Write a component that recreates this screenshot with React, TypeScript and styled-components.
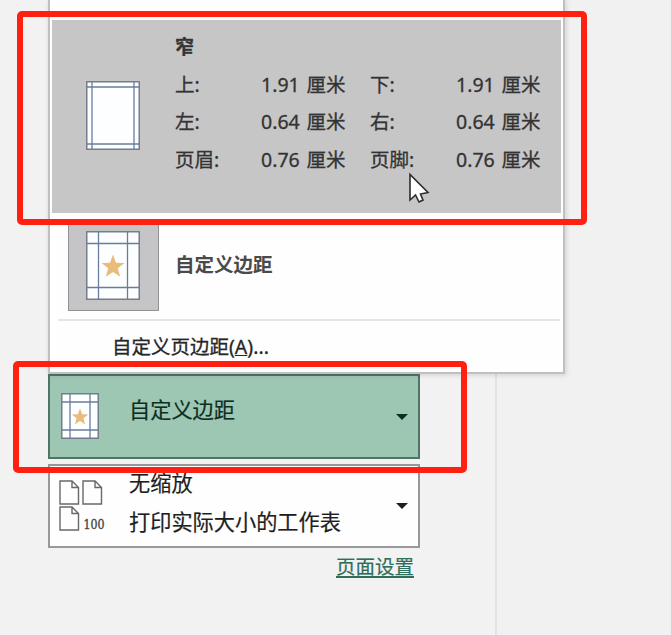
import React from 'react'
import styled, { createGlobalStyle } from 'styled-components'

const GlobalStyle = createGlobalStyle`
  * {
    box-sizing: border-box;
  }
  body {
    margin: 0;
    overflow: hidden;
    background-color: #f1f1f2;
    font-family: 'Noto Sans', 'Noto Sans CJK SC', sans-serif;
  }
`

const Page = styled.div`
  position: relative;
  width: 671px;
  height: 635px;
  overflow: hidden;
`

const Pane = styled.div`
  width: 497px;
  height: 635px;
  padding-left: 48px;
  background-color: #f2f2f2;
  border-right: 2px solid #e2e2e3;
`

const Menu = styled.div`
  position: relative;
  width: 517px;
  height: 374px;
  padding: 20px 2px 0 2px;
  background-color: #fefefe;
  border: solid #c0c0c4;
  border-width: 0 2px 2px 2px;
  box-shadow: 1px 1px 5px rgba(0, 0, 0, 0.14);
`

const Preset = styled.div`
  display: flex;
  height: 193px;
  padding-left: 34px;
  background-color: #c6c6c6;
`

const PresetIcon = styled.div`
  width: 89px;
  padding-top: 61px;
`

const PresetBody = styled.div`
  padding-top: 9px;
  color: #333;
  font-size: 19.5px;
  line-height: 37.2px;
  -webkit-text-stroke: 0.3px #333;
`

const PresetName = styled.div`
  font-weight: 700;
  font-size: 19px;
`

const Values = styled.div`
  display: grid;
  grid-template-columns: 86px 109px 86px 90px;
  white-space: nowrap;
  word-spacing: 1.8px;
`

const CustomRow = styled.div`
  display: flex;
  height: 91px;
  margin: 7px 0 0 16px;
`

const Tile = styled.div`
  display: flex;
  width: 91px;
  height: 91px;
  padding: 10px 0 0 17px;
  background-color: #c5c5c7;
  border: 1px solid #939396;
`

const CustomLabel = styled.div`
  margin-left: 16px;
  color: #4a4a4a;
  font-size: 19.5px;
  font-weight: 700;
  line-height: 90px;
`

const Separator = styled.div`
  height: 2px;
  margin: 8px 1px 0 6px;
  background-color: #e6e4e9;
`

const MenuItem = styled.div`
  padding-left: 60px;
  margin-top: 7px;
  color: #262626;
  font-size: 19.5px;
  line-height: 37px;
  -webkit-text-stroke: 0.3px #262626;
`

const Picker = styled.div<{ $active?: boolean }>`
  display: flex;
  width: 372px;
  height: ${({ $active }) => ($active ? '85px' : '84px')};
  margin-top: ${({ $active }) => ($active ? '0' : '5px')};
  padding-right: 10px;
  color: ${({ $active }) => ($active ? '#0d2e22' : '#1e1e1e')};
  background-color: ${({ $active }) => ($active ? '#9dc6b3' : '#fefefe')};
  border: ${({ $active }) => ($active ? '2px solid #4f7566' : '2px solid #98989b')};
`

const PickerIcon = styled.div<{ $top: number; $left: number }>`
  width: 79px;
  padding: ${({ $top, $left }) => `${$top}px 0 0 ${$left}px`};
`

const PickerText = styled.div<{ $top: number }>`
  flex: 1;
  margin-top: ${({ $top }) => $top}px;
  font-size: 21.2px;
  line-height: 38.5px;
  white-space: nowrap;
  -webkit-text-stroke: 0.2px currentColor;
`

const Arrow = styled.div`
  align-self: center;
  border: 6px solid transparent;
  border-top-color: currentColor;
  border-bottom: 0;
`

const SetupRow = styled.div`
  display: flex;
  justify-content: flex-end;
  width: 366px;
  margin-top: 5px;
`

const SetupLink = styled.a`
  color: #2f6f59;
  font-size: 19.5px;
  line-height: 28px;
  text-decoration: underline;
  text-decoration-thickness: 2px;
  text-underline-offset: 2px;
  -webkit-text-stroke: 0.2px #2f6f59;
`

const Highlight = styled.div<{ $x: number; $y: number; $w: number; $h: number }>`
  position: absolute;
  left: ${({ $x }) => $x}px;
  top: ${({ $y }) => $y}px;
  width: ${({ $w }) => $w}px;
  height: ${({ $h }) => $h}px;
  border: 6px solid #ff2012;
  border-radius: 5px;
`

const Cursor = styled.svg`
  position: absolute;
  left: 407px;
  top: 172px;
`

const star = '0,-12 3,-3.8 11.5,-3.6 4.8,1.8 7.2,10.3 0,5.5 -7.2,10.3 -4.8,1.8 -11.5,-3.6 -3,-3.8'

type MarginIconProps = {
  w: number
  h: number
  x: number
  y: number
  starScale?: number
}

function MarginIcon({ w, h, x, y, starScale }: MarginIconProps) {
  return (
    <svg width={w} height={h} viewBox={`0 0 ${w} ${h}`}>
      <rect x="0.75" y="0.75" width={w - 1.5} height={h - 1.5} fill="#fdfeff" stroke="#737d8b" strokeWidth="1.5" />
      <path
        d={`M${x} 1V${h - 1}M${w - x} 1V${h - 1}M1 ${y}H${w - 1}M1 ${h - y}H${w - 1}`}
        stroke="#687d9f"
        strokeWidth="1.3"
      />
      {starScale && (
        <polygon points={star} fill="#e8bd7b" transform={`translate(${w / 2} ${h / 2 + 1}) scale(${starScale})`} />
      )}
    </svg>
  )
}

function PagesIcon() {
  const sheets = [[1, 1], [24, 1], [1, 27]]
  return (
    <svg width="50" height="54" viewBox="0 0 50 54">
      {sheets.map(([x, y]) => (
        <path
          key={`${x}-${y}`}
          transform={`translate(${x} ${y})`}
          d="M0 0H12L18.5 6.5V23H0ZM12 0V6.5H18.5"
          fill="#fefefe"
          stroke="#68686a"
          strokeWidth="1.4"
        />
      ))}
      <text
        x="24.5"
        y="48.5"
        fontFamily="DejaVu Serif"
        fontSize="12"
        fill="#48484a"
        stroke="#48484a"
        strokeWidth="0.4"
        textLength="21"
        lengthAdjust="spacingAndGlyphs"
      >
        100
      </text>
    </svg>
  )
}

const margins = [
  ['上:', '1.91 厘米', '下:', '1.91 厘米'],
  ['左:', '0.64 厘米', '右:', '0.64 厘米'],
  ['页眉:', '0.76 厘米', '页脚:', '0.76 厘米'],
]

function App() {
  return (
    <Page>
      <GlobalStyle />
      <Pane>
        <Menu>
          <Preset>
            <PresetIcon>
              <MarginIcon w={54} h={69} x={6} y={6} />
            </PresetIcon>
            <PresetBody>
              <PresetName>窄</PresetName>
              <Values>
                {margins.flat().map((text, i) => (
                  <span key={i}>{text}</span>
                ))}
              </Values>
            </PresetBody>
          </Preset>
          <CustomRow>
            <Tile>
              <MarginIcon w={54} h={69} x={12.5} y={12.5} starScale={1} />
            </Tile>
            <CustomLabel>自定义边距</CustomLabel>
          </CustomRow>
          <Separator />
          <MenuItem>自定义页边距(<u>A</u>)...</MenuItem>
        </Menu>
        <Picker $active>
          <PickerIcon $top={17} $left={11}>
            <MarginIcon w={38} h={46} x={9} y={9} starScale={0.72} />
          </PickerIcon>
          <PickerText $top={15}>自定义边距</PickerText>
          <Arrow />
        </Picker>
        <Picker>
          <PickerIcon $top={14} $left={9}>
            <PagesIcon />
          </PickerIcon>
          <PickerText $top={-2}>
            <div>无缩放</div>
            <div>打印实际大小的工作表</div>
          </PickerText>
          <Arrow />
        </Picker>
        <SetupRow>
          <SetupLink>页面设置</SetupLink>
        </SetupRow>
      </Pane>
      <Highlight $x={17} $y={11} $w={570} $h={214} />
      <Highlight $x={13} $y={361} $w={454} $h={112} />
      <Cursor width="24" height="32" viewBox="0 0 24 32">
        <path
          d="M3 2.5V28L8.5 23L12 30L16 28L13.5 22L21 20.5Z"
          fill="#fff"
          stroke="#2c2c2c"
          strokeWidth="1.6"
        />
      </Cursor>
    </Page>
  )
}

export default App
